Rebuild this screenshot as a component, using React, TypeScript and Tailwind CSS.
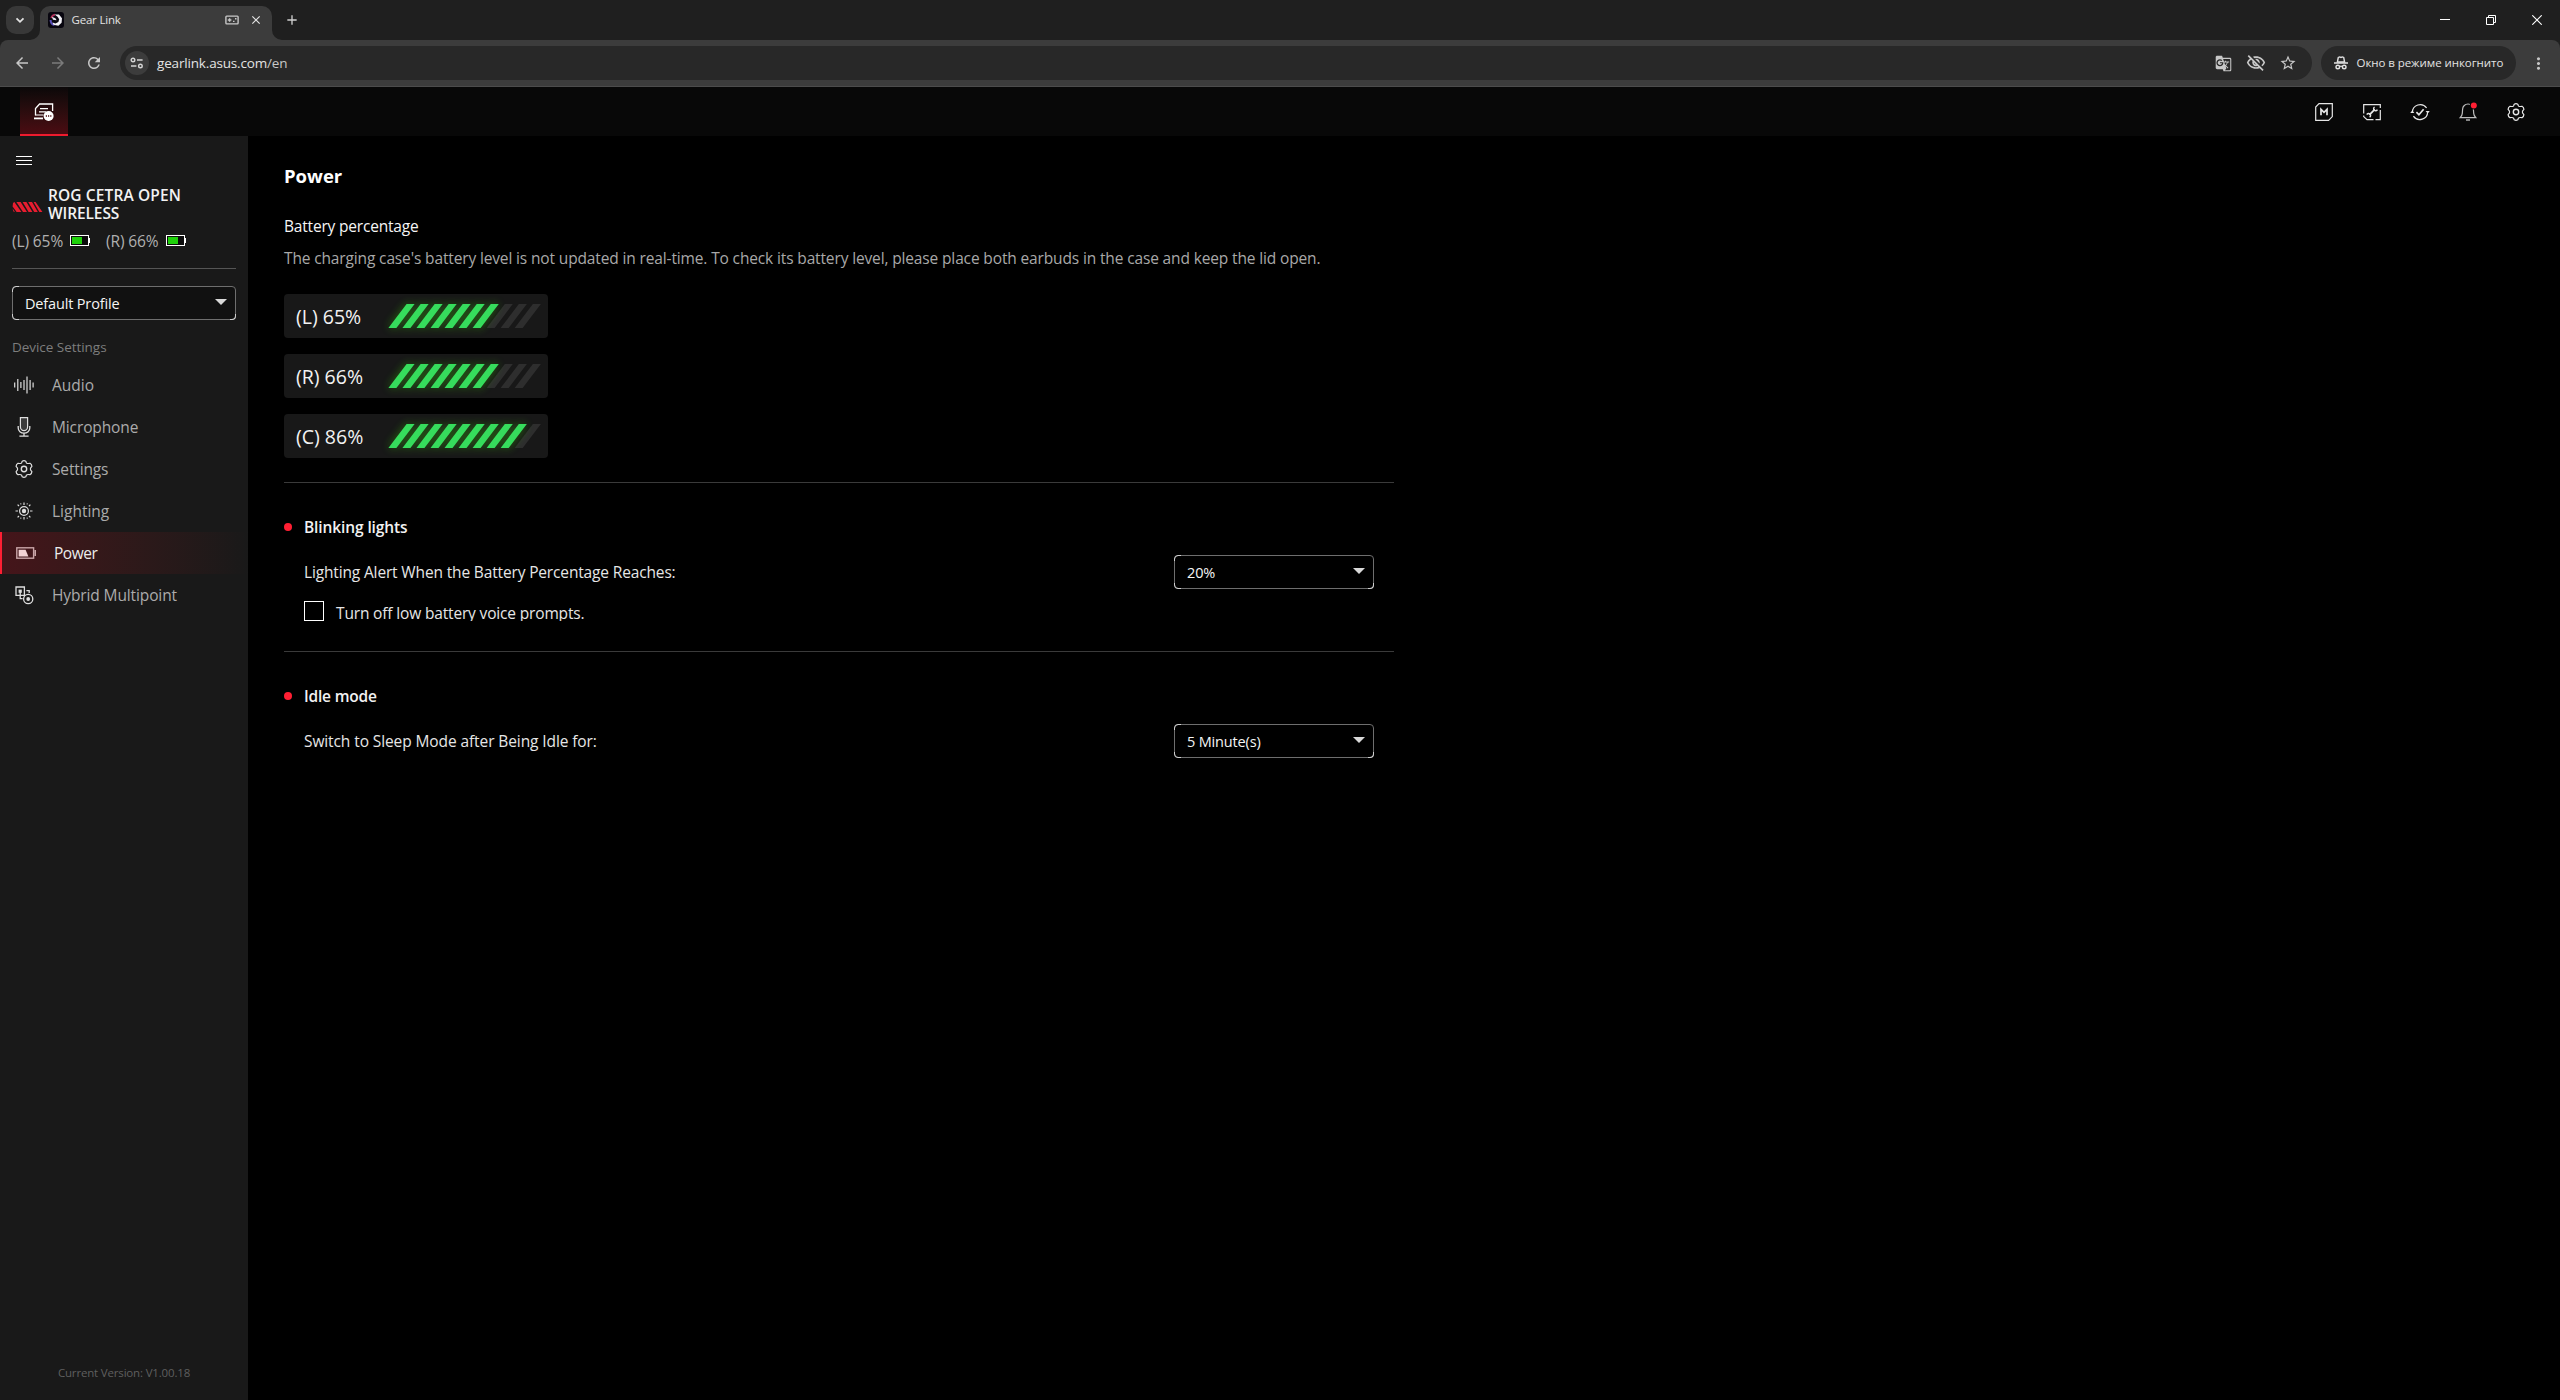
import React from "react";
import {
  MdArrowBack,
  MdArrowForward,
  MdRefresh,
  MdGTranslate,
  MdOutlineVisibilityOff,
  MdStarBorder,
  MdMoreVert,
  MdClose,
  MdAdd,
} from "react-icons/md";

type IconProps = { w: number; h: number; className?: string; children: React.ReactNode };

function Icon({ w, h, className = "", children }: IconProps) {
  return (
    <svg
      width={w}
      height={h}
      viewBox={`0 0 ${w} ${h}`}
      fill="none"
      stroke="currentColor"
      strokeWidth={1.2}
      className={`block shrink-0 ${className}`}
    >
      {children}
    </svg>
  );
}

const GEAR =
  "M7.2 1.2 Q9 0.2 10.8 1.2 L11.4 2.8 Q12.2 3.6 13.3 3.5 L15 3.3 Q16.8 4.4 16.9 6.4 L15.7 7.8 Q15.2 9 15.7 10.2 L16.9 11.6 Q16.8 13.6 15 14.7 L13.3 14.5 Q12.2 14.4 11.4 15.2 L10.8 16.8 Q9 17.8 7.2 16.8 L6.6 15.2 Q5.8 14.4 4.7 14.5 L3 14.7 Q1.2 13.6 1.1 11.6 L2.3 10.2 Q2.8 9 2.3 7.8 L1.1 6.4 Q1.2 4.4 3 3.3 L4.7 3.5 Q5.8 3.6 6.6 2.8 Z";

function GearIcon() {
  return (
    <Icon w={18} h={18}>
      <path d={GEAR} strokeLinejoin="round" />
      <circle cx={9} cy={9} r={2.7} strokeWidth={1.4} />
    </Icon>
  );
}

/* ---------- Browser chrome ---------- */

function TabStrip() {
  return (
    <div className="flex h-10 items-start bg-[#1f1f1f] text-[#e3e3e3]">
      <div className="mt-1.5 ml-1.5 flex size-7 items-center justify-center rounded-[10px] bg-[#383838]">
        <Icon w={10} h={10}>
          <path d="M1.5 3.3 L5 6.8 L8.5 3.3" strokeWidth={1.8} />
        </Icon>
      </div>
      <div className="relative mt-1.5 ml-1.5 flex h-[34px] w-[232px] items-center rounded-t-[10px] bg-[#3c3c3c] pb-1.5">
        <svg className="absolute bottom-0 -left-2.5" width={10} height={10} viewBox="0 0 10 10">
          <path d="M10 0 V10 H0 A10 10 0 0 0 10 0Z" fill="#3c3c3c" />
        </svg>
        <svg className="absolute -right-2.5 bottom-0" width={10} height={10} viewBox="0 0 10 10">
          <path d="M0 0 V10 H10 A10 10 0 0 1 0 0Z" fill="#3c3c3c" />
        </svg>
        <svg className="ml-2 block" width={16} height={16} viewBox="0 0 16 16">
          <rect width={16} height={16} rx={3} fill="#08060f" />
          <path d="M3.2 6 A5 5 0 0 1 7 2.6" stroke="#b0305a" strokeWidth={1.8} fill="none" />
          <path d="M2.6 8 A5.2 5.2 0 0 0 6.5 13" stroke="#5a50b8" strokeWidth={2} fill="none" />
          <path
            d="M6.6 2.6 L11 2.4 L14 6.2 L13.6 10.8 L10.4 13.8 L5.4 12.8 L4.6 10.4 L7.4 11.4 L10.4 10 L11.2 7.2 L9.6 4.8 Z"
            fill="#f2f2f7"
          />
          <path d="M3.8 4.8 L7.4 6.2 L8.6 8.2 L5 7.8 Z" fill="#e9e9f2" />
        </svg>
        <span className="ml-[7.5px] text-[11.5px] leading-4 tracking-[-0.2px]">Gear Link</span>
        <Icon w={14} h={10} className="ml-auto text-[#c7c7c7]">
          <rect x={0.9} y={1.1} width={12.2} height={7.8} rx={0.8} strokeWidth={1.4} />
          <path d="M2.8 5 H6.4 M4.6 3.2 V6.8 M8 6.4 h1.5 M10 3.8 h1.5" strokeWidth={1.4} />
        </Icon>
        <MdClose className="mr-[9px] ml-[10px] block size-[14px]" />
      </div>
      <MdAdd className="mt-[12px] ml-[12px] block size-4 text-[#d0d0d0]" />
      <div className="ml-auto flex h-10 items-center text-white">
        <div className="flex w-[46px] justify-center">
          <Icon w={10} h={10}>
            <path d="M0 4.5 H10" strokeWidth={1} />
          </Icon>
        </div>
        <div className="flex w-[46px] justify-center">
          <Icon w={10} h={10}>
            <path d="M0.5 2.5 H7.5 V9.5 H0.5 Z M2.5 2.5 V0.5 H9.5 V7.5 H7.5" strokeWidth={1} />
          </Icon>
        </div>
        <div className="flex w-[46px] justify-center">
          <Icon w={10} h={10}>
            <path d="M0.3 0.3 L9.7 9.7 M9.7 0.3 L0.3 9.7" strokeWidth={1.1} />
          </Icon>
        </div>
      </div>
    </div>
  );
}

function Toolbar() {
  return (
    <div className="bg-[#1f1f1f]">
      <div className="flex h-[47px] items-start rounded-t-[8px] border-b border-[#4c4c4c] bg-[#3c3c3c] pt-1.5 text-[#c7c7c7]">
        <div className="flex h-[34px] items-center">
          <MdArrowBack className="ml-[13px] block size-[18px]" />
          <MdArrowForward className="ml-[18px] block size-[18px] text-[#7b7b7b]" />
          <MdRefresh className="ml-[18px] block size-[18px]" />
        </div>
        <div className="ml-[17px] flex h-[34px] w-[2192px] items-center rounded-full bg-[#282828] pl-[5px]">
          <div className="flex size-6 items-center justify-center rounded-full bg-[#3c3c3c] text-[#d5d5d5]">
            <Icon w={14} h={12}>
              <circle cx={3} cy={3} r={1.8} strokeWidth={1.4} />
              <path d="M7 3 H12.6 M1 9 H6.4" strokeWidth={1.5} />
              <circle cx={10.4} cy={9} r={1.8} strokeWidth={1.4} />
            </Icon>
          </div>
          <span className="ml-2 text-[13.5px] leading-5 tracking-[-0.17px] text-[#e3e3e3]">
            gearlink.asus.com<span className="text-[#c7c7c7]">/en</span>
          </span>
          <div className="ml-auto flex items-center">
            <MdGTranslate className="block size-[17px]" />
            <MdOutlineVisibilityOff className="ml-[14px] block size-5" />
            <MdStarBorder className="mr-[15px] ml-[13px] block size-[18px]" />
          </div>
        </div>
        <div className="ml-[9px] flex h-[34px] w-[195px] items-center rounded-full bg-[#282828] pl-[13px] text-[#e3e3e3]">
          <Icon w={14} h={14}>
            <path d="M3.4 6 L4.3 1.4 L5.6 0.9 L7 1.4 L8.4 0.9 L9.7 1.4 L10.6 6 Z" strokeWidth={1.4} />
            <path d="M0 7 H14" strokeWidth={1.5} />
            <circle cx={3.8} cy={11} r={1.8} strokeWidth={1.4} />
            <circle cx={10.2} cy={11} r={1.8} strokeWidth={1.4} />
            <path d="M5.6 10.6 Q7 9.8 8.4 10.6" strokeWidth={1.2} />
          </Icon>
          <span className="ml-[8.5px] text-[11.5px] leading-4 tracking-[-0.06px] whitespace-nowrap">
            Окно в режиме инкогнито
          </span>
        </div>
        <MdMoreVert className="mt-2 ml-[12.5px] block size-[19px]" />
      </div>
    </div>
  );
}

/* ---------- Application header ---------- */

function AppHeader() {
  return (
    <header className="flex h-[49px] items-stretch bg-[#080808] text-[#e6e6e6]">
      <div className="ml-5 flex w-12 items-center justify-center border-b-2 border-[#ee1b2e] bg-linear-to-b from-[#0b0809] to-[#4b0b12] text-white">
        <Icon w={20} h={20} className="mt-[2px]">
          <path d="M1.5 13.5 V6.5 L5.6 2 H18.6 V9" strokeWidth={1.3} />
          <path d="M6 6.6 H14 M5 9.8 H12 M1.5 13 H9.5" strokeWidth={1.2} />
          <path d="M0 16.4 H9" strokeWidth={1.8} />
          <circle cx={14.6} cy={14} r={5} fill="currentColor" stroke="none" />
          <path d="M11.8 14 h1.2 M14 14 h1.2 M16.2 14 h1.2" stroke="#4b0b12" strokeWidth={1.3} />
        </Icon>
      </div>
      <div className="ml-auto flex items-center pt-px pr-5">
        <div className="flex w-12 justify-center">
          <Icon w={18} h={18}>
            <path d="M4 0.7 H17.3 V13.6 L13.6 17.3 H0.7 V4 Z" />
            <path d="M6 12.2 V6.4 L9 9.4 L12 6.4 V12.2" strokeWidth={1.7} />
          </Icon>
        </div>
        <div className="flex w-12 justify-center">
          <Icon w={18} h={18}>
            <path d="M0.7 10.5 V1.7 H17.3 V5 M17.3 7 V16.7 H12.5 M10.5 16.7 H4 L0.7 13.6 V12.4" />
            <path d="M6.4 11.8 L11.8 6.4" strokeWidth={1.8} />
            <path
              d="M3.8 11.6 A2 2 0 1 1 6.6 14.2 M11.6 4 A2 2 0 1 0 14.4 6.6"
              strokeWidth={1.4}
            />
          </Icon>
        </div>
        <div className="flex w-12 justify-center">
          <Icon w={20} h={18}>
            <path d="M2.4 9.6 A7.8 7.8 0 0 1 16.6 5 M17.6 8.4 A7.8 7.8 0 0 1 3.4 13.2" strokeWidth={1.2} />
            <path d="M0.2 10 L2.3 7.6 L4.4 10 Z M15.6 8 L17.7 10.4 L19.8 8 Z" fill="currentColor" stroke="none" />
            <path d="M6.4 9.2 L8.9 11.7 L13.6 6.2" strokeWidth={1.7} />
          </Icon>
        </div>
        <div className="flex w-12 justify-center text-[#bdbdbd]">
          <Icon w={18} h={20}>
            <path
              d="M1.2 15.6 H16.8 Q14.9 13.8 14.7 11.4 L14.4 7.2 A5.4 5.4 0 0 0 9 2 A5.4 5.4 0 0 0 3.6 7.2 L3.3 11.4 Q3.1 13.8 1.2 15.6 Z"
              strokeWidth={1.2}
            />
            <path d="M7 18 H11" strokeWidth={1.4} />
            <circle cx={14.8} cy={3.4} r={4} fill="#080808" stroke="none" />
            <circle cx={14.8} cy={3.4} r={3} fill="#ff1f33" stroke="none" />
          </Icon>
        </div>
        <div className="flex w-12 justify-center">
          <GearIcon />
        </div>
      </div>
    </header>
  );
}

/* ---------- Shared select ---------- */

function Select({ label, className }: { label: string; className: string }) {
  return (
    <div className={`relative flex h-[34px] items-center rounded border border-[#6e6e6e] pl-3 ${className}`}>
      <svg className="absolute -inset-px block" width="100%" height="34" overflow="visible">
        <path d="M0.5 6 V4 A3.5 3.5 0 0 1 4 0.5 H7 M0.5 28 V30 A3.5 3.5 0 0 0 4 33.5 H7" fill="none" stroke="#cfcfcf" />
      </svg>
      <span className="absolute -right-px -bottom-px size-1.5 rounded-br border-r border-b border-[#cfcfcf]" />
      <span className="pt-px text-[14.5px] leading-5 tracking-[-0.16px] whitespace-nowrap text-[#f5f5f5]">{label}</span>
      <svg className="mr-2 mb-[3px] ml-auto block" width={12} height={6} viewBox="0 0 12 6">
        <path d="M0 0 H12 L6 6 Z" fill="#d9d9d9" />
      </svg>
    </div>
  );
}

/* ---------- Sidebar ---------- */

function MiniBattery({ fill }: { fill: number }) {
  return (
    <svg className="block" width={20} height={12} viewBox="0 0 20 12">
      <rect x={0.5} y={0.5} width={18} height={10} fill="#0c0c0c" stroke="#fff" />
      <rect x={19} y={3} width={1} height={5} fill="#fff" />
      <rect x={2} y={2} width={fill} height={7} fill="#1fd10b" />
    </svg>
  );
}

const NAV: { label: string; tracking: string; icon: React.ReactNode }[] = [
  {
    label: "Audio",
    tracking: "tracking-normal",
    icon: (
      <Icon w={20} h={18}>
        <path
          d="M0.7 6.5 V11.5 M3.8 3 V15 M6.9 6 V12 M10 4 V14 M13 0.4 V17.6 M16.1 4 V14 M19.1 6.5 V11.5"
          strokeWidth={1.2}
        />
      </Icon>
    ),
  },
  {
    label: "Microphone",
    tracking: "tracking-[-0.12px]",
    icon: (
      <Icon w={14} h={20}>
        <path d="M3.4 0.7 H10.6 V10 A3.6 3.6 0 0 1 3.4 10 Z" fill="#3a3a3a" />
        <path d="M1.2 9 V11 A5.8 5.2 0 0 0 12.8 11 V9 M7 16 V19 M2.4 19.2 H11.6" strokeWidth={1.3} />
      </Icon>
    ),
  },
  { label: "Settings", tracking: "tracking-[-0.15px]", icon: <GearIcon /> },
  {
    label: "Lighting",
    tracking: "tracking-normal",
    icon: (
      <Icon w={18} h={18}>
        <circle cx={9} cy={9} r={4.4} />
        <circle cx={9} cy={9} r={2.2} fill="currentColor" stroke="none" />
        <path
          d="M9 0.5 V3 M9 15 V17.5 M0.5 9 H3 M15 9 H17.5 M2.6 2.6 L4 4 M14 14 L15.4 15.4 M15.4 2.6 L14 4 M4 14 L2.6 15.4 M5.6 1.4 L6 2.4 M12.4 1.4 L12 2.4 M5.6 16.6 L6 15.6 M12.4 16.6 L12 15.6"
          strokeWidth={1.2}
        />
      </Icon>
    ),
  },
  {
    label: "Power",
    tracking: "tracking-[-0.45px]",
    icon: (
      <Icon w={20} h={12} className="text-[#c9a5a8]">
        <rect x={0.8} y={0.8} width={16.8} height={10.4} strokeWidth={1.4} />
        <path d="M19.2 3 V9" strokeWidth={1.6} />
        <path d="M2.6 2.8 H9.6 L12.4 9.4 H2.6 Z" fill="#f3d3d5" stroke="none" />
      </Icon>
    ),
  },
  {
    label: "Hybrid Multipoint",
    tracking: "tracking-[-0.12px]",
    icon: (
      <Icon w={19} h={19}>
        <path d="M1 1 H9.4 V9.4 H1 Z" strokeWidth={1.3} />
        <path d="M3.6 3.6 H6.8 V6.8 H3.6 Z" fill="currentColor" stroke="none" />
        <path d="M5.2 6 V12.6 H7.6 M11.4 4.6 H14.2 V7" strokeWidth={1.3} />
        <circle cx={13.2} cy={13} r={4.6} strokeWidth={1.3} />
        <circle cx={13.2} cy={13} r={1.9} fill="currentColor" stroke="none" />
      </Icon>
    ),
  },
];

function Sidebar() {
  return (
    <aside className="flex w-[248px] shrink-0 flex-col bg-[#191919]">
      <div className="mt-5 ml-4 flex flex-col gap-[3px]">
        <span className="h-px w-4 bg-white" />
        <span className="h-px w-4 bg-white" />
        <span className="h-px w-4 bg-white" />
      </div>
      <div className="mt-[21px] flex items-center pl-3">
        <svg className="mt-[5px] block" width={31} height={10} viewBox="0 0 31 10">
          <path
            d="M1 1 L2.4 0 L9.4 10 H4.6 L0.6 4.6 Z M4.4 0 H8.6 L15 10 H11 Z M10.6 0 H14.4 L20.4 10 H16.6 Z M16.2 0 H20 L25.8 10 H22.2 Z M21.6 0 H23.6 L30.4 10 H27.4 Z M0.6 6.6 L3 10 L1.4 9.4 Z"
            fill="#e81d30"
          />
        </svg>
        <h2 className="ml-[5px] text-[15.5px] leading-[18px] font-semibold text-[#f2f2f2]">
          <span className="block tracking-[0.12px]">ROG CETRA OPEN</span>
          <span className="block tracking-[-0.1px]">WIRELESS</span>
        </h2>
      </div>
      <div className="mt-[9px] flex h-5 items-center pl-3 text-[15.5px] leading-5 tracking-[-0.1px] text-[#b0b0b0]">
        <span className="w-[58px]">(L) 65%</span>
        <MiniBattery fill={10} />
        <span className="ml-4 w-[60px]">(R) 66%</span>
        <MiniBattery fill={10} />
      </div>
      <div className="mx-3 mt-[17px] h-px bg-[#555]" />
      <Select label="Default Profile" className="mx-3 mt-[17px] bg-[#111]" />
      <p className="mt-[17px] pl-3 text-[13.5px] leading-5 tracking-[-0.04px] text-[#7d7d7d]">Device Settings</p>
      <nav className="mt-[7px] text-[15.5px] leading-5">
        {NAV.map((item) => {
          const active = item.label === "Power";
          return (
            <div
              key={item.label}
              className={
                active
                  ? "flex h-[42px] items-center border-l-2 border-[#ff1f33] bg-linear-to-r from-[#45151a] to-[#191919] text-[#ececec]"
                  : "flex h-[42px] items-center text-[#ababab]"
              }
            >
              <span className={active ? "flex w-12 justify-center" : "flex w-12 justify-center text-[#dedede]"}>
                {item.icon}
              </span>
              <span className={`ml-1 ${item.tracking}`}>{item.label}</span>
            </div>
          );
        })}
      </nav>
      <p className="mt-auto mb-[17px] text-center text-[11.5px] leading-5 tracking-[-0.17px] text-[#5f5f5f]">
        Current Version: V1.00.18
      </p>
    </aside>
  );
}

/* ---------- Main content ---------- */

function BatteryBars({ filled }: { filled: number }) {
  const bar = (i: number) => {
    const x = 12.4 + i * 14.03;
    return `M${x} 34 L${x + 18.2} 10 H${x + 26.2} L${x + 8} 34 Z`;
  };
  const idx = Array.from({ length: 10 }, (_, i) => i);
  const on = idx.filter((i) => i < filled).map(bar).join(" ");
  const off = idx.filter((i) => i >= filled).map(bar).join(" ");
  return (
    <svg className="block" width={172} height={44} viewBox="0 0 172 44">
      <defs>
        <filter id={`glow${filled}`} x="-20%" y="-60%" width="140%" height="220%">
          <feGaussianBlur stdDeviation="5" />
        </filter>
      </defs>
      <path d={off} fill="#2e2e2e" />
      <path d={on} fill="#3fd10f" opacity={0.45} filter={`url(#glow${filled})`} />
      <path d={on} fill="#36dc5c" />
    </svg>
  );
}

function BatteryTile({ label, filled }: { label: string; filled: number }) {
  return (
    <div className="flex h-11 w-[264px] items-center justify-between overflow-hidden rounded bg-[#181818] pl-3">
      <span className="pt-0.5 text-[19.5px] leading-6 whitespace-nowrap text-[#f2f2f2]">{label}</span>
      <BatteryBars filled={filled} />
    </div>
  );
}

function SectionTitle({ children, className }: { children: string; className: string }) {
  return (
    <h3 className={`flex items-center text-[15.5px] leading-5 font-semibold text-[#f2f2f2] ${className}`}>
      <span className="mr-3 size-2 rounded-full bg-[#ff1f33]" />
      {children}
    </h3>
  );
}

function Main() {
  return (
    <main className="flex flex-1 flex-col bg-black pl-9 text-[15.5px] leading-5">
      <h1 className="mt-[28px] text-[18.5px] leading-6 font-bold text-white">Power</h1>
      <p className="mt-[28px] tracking-[-0.19px] text-[#f5f5f5]">Battery percentage</p>
      <p className="mt-3 tracking-[-0.14px] whitespace-nowrap text-[#a8a8a8]">
        The charging case's battery level is not updated in real-time. To check its battery level, please place both
        earbuds in the case and keep the lid open.
      </p>
      <div className="mt-[26px] flex flex-col gap-4">
        <BatteryTile label="(L) 65%" filled={7} />
        <BatteryTile label="(R) 66%" filled={7} />
        <BatteryTile label="(C) 86%" filled={9} />
      </div>
      <section className="mt-6 h-[169px] w-[1110px] border-t border-[#3a3a3a] text-[#e6e6e6]">
        <SectionTitle className="mt-[34px] tracking-[-0.11px]">Blinking lights</SectionTitle>
        <div className="mt-[18px] flex items-center justify-between pr-5 pl-5">
          <span className="pb-px tracking-[-0.15px]">Lighting Alert When the Battery Percentage Reaches:</span>
          <Select label="20%" className="w-[200px]" />
        </div>
        <div className="mt-3 flex h-5 overflow-hidden pl-5">
          <span className="size-5 border border-white" />
          <span className="ml-3 pt-[1.5px] tracking-[-0.16px]">Turn off low battery voice prompts.</span>
        </div>
      </section>
      <section className="w-[1110px] border-t border-[#3a3a3a] text-[#e6e6e6]">
        <SectionTitle className="mt-[34px] tracking-[-0.2px]">Idle mode</SectionTitle>
        <div className="mt-[18px] flex items-center justify-between pr-5 pl-5">
          <span className="pb-px tracking-[-0.1px]">Switch to Sleep Mode after Being Idle for:</span>
          <Select label="5 Minute(s)" className="w-[200px]" />
        </div>
      </section>
    </main>
  );
}

export default function App() {
  return (
    <div className="flex h-[1400px] w-[2560px] flex-col overflow-hidden bg-black font-['Open_Sans','Noto_Sans',sans-serif]">
      <TabStrip />
      <Toolbar />
      <AppHeader />
      <div className="flex flex-1">
        <Sidebar />
        <Main />
      </div>
    </div>
  );
}
